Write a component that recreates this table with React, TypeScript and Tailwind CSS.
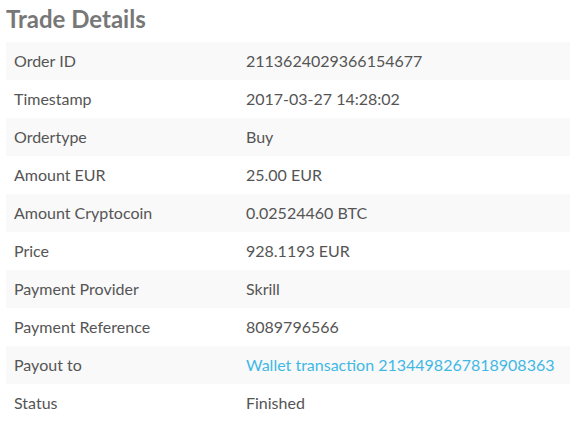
const rows: { label: string; value: string; link?: boolean }[] = [
  { label: "Order ID", value: "2113624029366154677" },
  { label: "Timestamp", value: "2017-03-27 14:28:02" },
  { label: "Ordertype", value: "Buy" },
  { label: "Amount EUR", value: "25.00 EUR" },
  { label: "Amount Cryptocoin", value: "0.02524460 BTC" },
  { label: "Price", value: "928.1193 EUR" },
  { label: "Payment Provider", value: "Skrill" },
  { label: "Payment Reference", value: "8089796566" },
  { label: "Payout to", value: "Wallet transaction 2134498267818908363", link: true },
  { label: "Status", value: "Finished" },
];

export default function App() {
  return (
    <div className="w-[570px] h-[434px] bg-white pl-[6px] font-['Lato',sans-serif] text-[#555]">
      <h2 className="text-[24px] font-bold text-[#777] leading-[36px] pt-[1px] mb-[5px]">Trade Details</h2>
      <table className="w-full border-collapse text-[16px]">
        <tbody>
          {rows.map((r, i) => (
            <tr key={i} className={i % 2 === 0 ? "bg-[#f9f9f9]" : "bg-white"}>
              <td className="h-[38px] w-[240px] px-[8px] align-middle">{r.label}</td>
              <td className="h-[38px] px-0 align-middle">
                {r.link ? <a className="text-[#3fb8e5]">{r.value}</a> : r.value}
              </td>
            </tr>
          ))}
        </tbody>
      </table>
    </div>
  );
}
